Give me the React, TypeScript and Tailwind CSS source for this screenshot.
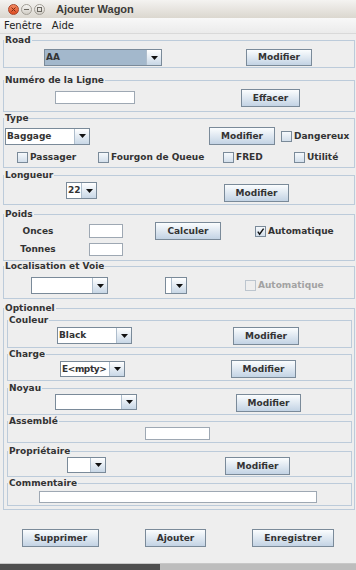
import React from 'react';

const Arrow = () => (
  <svg width="7" height="4" viewBox="0 0 7 4">
    <path d="M0 0h7L3.5 4z" fill="#111" />
  </svg>
);

const Btn: React.FC<{ label: string; className: string }> = ({ label, className }) => (
  <button
    type="button"
    className={`flex items-center justify-center border border-[#7a8a99] bg-linear-to-b from-[#fbfdfe] to-[#c3d3e4] text-[9px] font-bold leading-none text-[#333] ${className}`}
  >
    {label}
  </button>
);

const Combo: React.FC<{ text?: string; selected?: boolean; tight?: boolean; className: string }> = ({
  text,
  selected,
  tight,
  className,
}) => (
  <div className={`flex border border-[#7a8a99] ${className}`}>
    <div
      className={`flex-1 flex items-center pl-[1px] text-[9px] font-bold leading-none text-[#333] overflow-hidden whitespace-nowrap ${selected ? 'bg-[#a3b8cc]' : 'bg-white'} ${tight ? 'tracking-[-0.4px]' : ''}`}
    >
      {text}
    </div>
    <div className="w-[15px] flex items-center justify-center border-l border-[#aebdcc] bg-linear-to-b from-white to-[#c8d7e6]">
      <Arrow />
    </div>
  </div>
);

const TextField: React.FC<{ className: string }> = ({ className }) => (
  <div className={`bg-white border border-[#9ea8b3] ${className}`} />
);

const Check: React.FC<{ label: string; checked?: boolean; disabled?: boolean; className?: string }> = ({
  label,
  checked,
  disabled,
  className,
}) => (
  <div className={`flex items-center gap-[2px] ${className ?? ''}`}>
    <div
      className={`w-[11px] h-[11px] flex items-center justify-center border ${disabled ? 'border-[#bcc5ce] bg-[#eeeeee]' : 'border-[#7a8a99] bg-linear-to-b from-[#f6f9fc] to-[#d3dfeb]'}`}
    >
      {checked && (
        <svg width="9" height="9" viewBox="0 0 9 9">
          <path d="M1.8 4.6 L3.6 7.2 L7.6 1.6" stroke="#111" strokeWidth="1.4" fill="none" />
        </svg>
      )}
    </div>
    <span className={`text-[9px] font-bold leading-none ${disabled ? 'text-[#a2a2a2]' : 'text-[#333]'}`}>{label}</span>
  </div>
);

const Group: React.FC<{ title: string; className?: string; children: React.ReactNode }> = ({ title, className, children }) => (
  <fieldset className={`border border-[#bccbda] ${className ?? ''}`}>
    <legend className="px-[1px] text-[9px] font-bold leading-[11px] text-[#333]">{title}</legend>
    {children}
  </fieldset>
);

export default function App() {
  return (
    <div className="w-[356px] h-[570px] overflow-hidden bg-[#eeeeee] flex flex-col font-['DejaVu_Sans',sans-serif]">
      {/* title bar */}
      <div className="h-[18px] flex items-center bg-linear-to-b from-[#f4f3f1] to-[#dbd7cf]">
        <div className="ml-[8px] flex gap-[2px]">
          <div className="w-[11px] h-[11px] rounded-full border border-[#a8452a] bg-linear-to-b from-[#f58a62] to-[#dd4a1d] flex items-center justify-center">
            <svg width="5" height="5" viewBox="0 0 5 5">
              <path d="M0.5 0.5L4.5 4.5M4.5 0.5L0.5 4.5" stroke="#7a2a12" strokeWidth="1" />
            </svg>
          </div>
          <div className="w-[11px] h-[11px] rounded-full border border-[#a29e96] bg-linear-to-b from-[#f6f5f3] to-[#d2cec6] flex items-center justify-center">
            <div className="w-[5px] h-[1px] bg-[#6a6760]" />
          </div>
          <div className="w-[11px] h-[11px] rounded-full border border-[#a29e96] bg-linear-to-b from-[#f6f5f3] to-[#d2cec6] flex items-center justify-center">
            <div className="w-[5px] h-[5px] border border-[#6a6760]" />
          </div>
        </div>
        <span className="ml-[11px] font-['Liberation_Sans',sans-serif] font-bold text-[11px] leading-none text-[#3c3b37]">
          Ajouter Wagon
        </span>
      </div>

      {/* menu bar */}
      <div className="h-[16px] flex items-center bg-linear-to-b from-[#f8f8f8] to-[#ebebeb] border-b border-[#d9d9d9] text-[10px] leading-none text-[#222]">
        <span className="ml-[4px]">Fenêtre</span>
        <span className="ml-[10px]">Aide</span>
      </div>

      <div className="pl-[3px] pr-[1px] flex flex-col">
        <Group title="Road" className="mt-[1px]">
          <div className="h-[21px] flex items-start pt-[3px]">
            <Combo text="AA" selected className="ml-[40px] w-[118px] h-[17px]" />
            <Btn label="Modifier" className="ml-[84px] w-[66px] h-[17px]" />
          </div>
        </Group>

        <Group title="Numéro de la Ligne" className="mt-[7px]">
          <div className="h-[25px] flex items-start">
            <TextField className="ml-[51px] mt-[5px] w-[80px] h-[13px]" />
            <Btn label="Effacer" className="ml-[106px] mt-[3px] w-[59px] h-[18px]" />
          </div>
        </Group>

        <Group title="Type" className="mt-[1px]">
          <div className="h-[43px] flex flex-col">
            <div className="mt-[3px] h-[18px] flex items-center">
              <Combo text="Baggage" className="ml-[1px] w-[85px] h-[17px]" />
              <Btn label="Modifier" className="ml-[119px] w-[66px] h-[18px]" />
              <Check label="Dangereux" className="ml-[6px]" />
            </div>
            <div className="mt-[6px] h-[13px] flex items-center pl-[13px]">
              <Check label="Passager" className="w-[81px]" />
              <Check label="Fourgon de Queue" className="w-[125px]" />
              <Check label="FRED" className="w-[71px]" />
              <Check label="Utilité" />
            </div>
          </div>
        </Group>

        <Group title="Longueur" className="mt-[2px]">
          <div className="h-[23px] flex items-start">
            <Combo text="22" className="ml-[62px] mt-[1px] w-[31px] h-[17px]" />
            <Btn label="Modifier" className="ml-[127px] mt-[3px] w-[65px] h-[18px]" />
          </div>
        </Group>

        <Group title="Poids" className="mt-[4px]">
          <div className="h-[40px] flex flex-col">
            <div className="mt-[2px] h-[18px] flex items-center">
              <span className="w-[68px] text-center text-[9px] font-bold leading-none text-[#333]">Onces</span>
              <TextField className="ml-[17px] w-[34px] h-[14px]" />
              <Btn label="Calculer" className="ml-[32px] w-[66px] h-[18px]" />
              <Check label="Automatique" checked className="ml-[34px]" />
            </div>
            <div className="mt-[3px] h-[13px] flex items-center">
              <span className="w-[68px] text-center text-[9px] font-bold leading-none text-[#333]">Tonnes</span>
              <TextField className="ml-[17px] w-[34px] h-[13px]" />
            </div>
          </div>
        </Group>

        <Group title="Localisation et Voie">
          <div className="h-[26px] flex items-start pt-[5px]">
            <Combo className="ml-[27px] w-[77px] h-[17px]" />
            <Combo className="ml-[57px] w-[22px] h-[17px]" />
            <Check label="Automatique" disabled className="ml-[58px] h-[17px]" />
          </div>
        </Group>

        <Group title="Optionnel" className="mt-[4px] pb-[3px]">
          <div className="pl-[3px] pr-[2px] flex flex-col">
            <Group title="Couleur" className="mt-[1px]">
              <div className="h-[21px] flex items-start pt-[1px]">
                <Combo text="Black" className="ml-[49px] w-[75px] h-[17px]" />
                <Btn label="Modifier" className="ml-[101px] w-[66px] h-[18px]" />
              </div>
            </Group>

            <Group title="Charge" className="mt-[1px]">
              <div className="h-[20px] flex items-start">
                <Combo text="E<mpty>" tight className="ml-[52px] mt-[1px] w-[65px] h-[16px]" />
                <Btn label="Modifier" className="ml-[106px] w-[65px] h-[18px]" />
              </div>
            </Group>

            <Group title="Noyau" className="mt-[2px]">
              <div className="h-[20px] flex items-start">
                <Combo className="ml-[47px] w-[82px] h-[16px]" />
                <Btn label="Modifier" className="ml-[99px] w-[65px] h-[18px]" />
              </div>
            </Group>

            <Group title="Assemblé" className="mt-[1px]">
              <div className="h-[15px] flex items-start">
                <TextField className="ml-[137px] w-[65px] h-[13px]" />
              </div>
            </Group>

            <Group title="Propriétaire" className="mt-[3px]">
              <div className="h-[19px] flex items-start">
                <Combo className="ml-[59px] w-[39px] h-[16px]" />
                <Btn label="Modifier" className="ml-[119px] w-[65px] h-[18px]" />
              </div>
            </Group>

            <Group title="Commentaire" className="mt-[1px]">
              <div className="h-[16px] flex items-start">
                <TextField className="ml-[31px] mt-[2px] w-[278px] h-[12px]" />
              </div>
            </Group>
          </div>
        </Group>
      </div>

      <div className="mt-[19px] h-[18px] flex">
        <Btn label="Supprimer" className="ml-[22px] w-[77px] h-[18px]" />
        <Btn label="Ajouter" className="ml-[46px] w-[61px] h-[18px]" />
        <Btn label="Enregistrer" className="ml-[46px] w-[82px] h-[18px]" />
      </div>

      <div className="mt-[16px] h-[1px] bg-[#c8c8c8]" />
      <div className="h-[6px] flex">
        <div className="w-[160px] bg-[#4f4f4f]" />
        <div className="flex-1 bg-[#bdbdbd]" />
      </div>
    </div>
  );
}
